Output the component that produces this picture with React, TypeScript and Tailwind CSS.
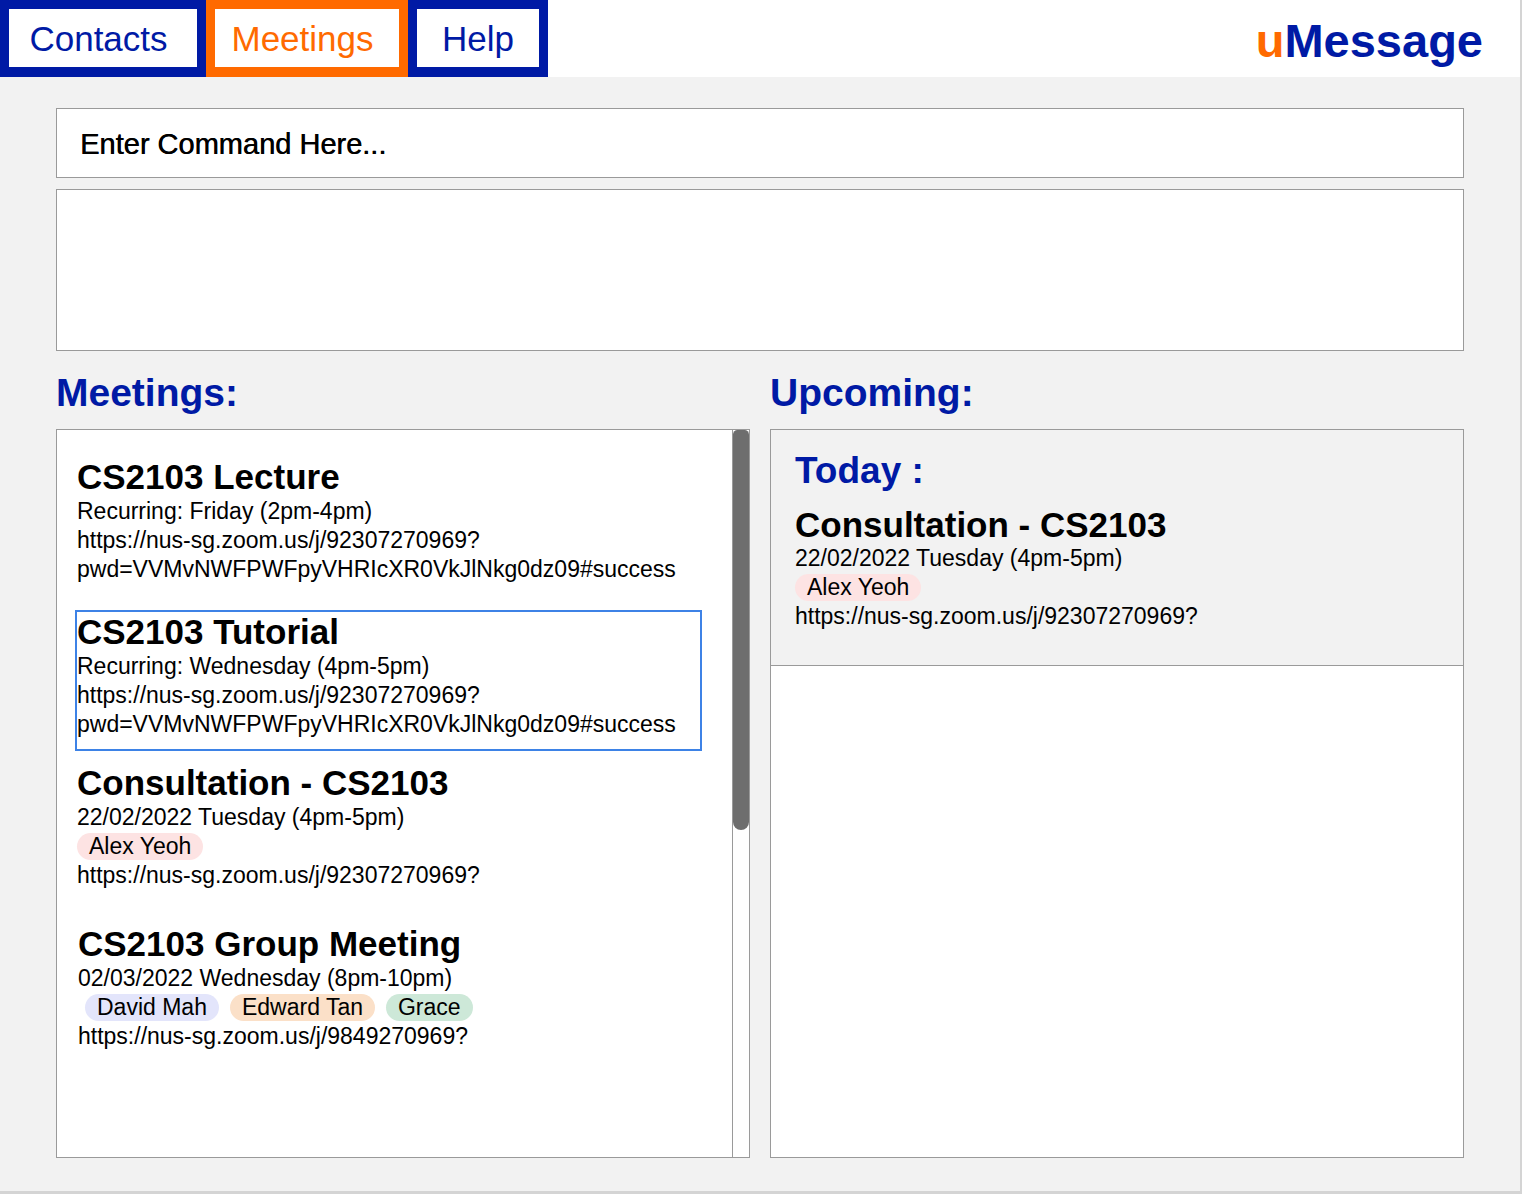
import React from 'react';

type Tag = { name: string; color: string };

type Meeting = {
  title: string;
  when: string;
  tags?: Tag[];
  links: string[];
  selected?: boolean;
  gap: string;
  tagRow?: string;
  shift?: string;
};

const PWD = 'pwd=VVMvNWFPWFpyVHRIcXR0VkJlNkg0dz09#success';

const meetings: Meeting[] = [
  {
    title: 'CS2103 Lecture',
    when: 'Recurring: Friday (2pm-4pm)',
    links: ['https://nus-sg.zoom.us/j/92307270969?', PWD],
    gap: 'mt-0',
  },
  {
    title: 'CS2103 Tutorial',
    when: 'Recurring: Wednesday (4pm-5pm)',
    links: ['https://nus-sg.zoom.us/j/92307270969?', PWD],
    selected: true,
    gap: 'mt-[14px]',
  },
  {
    title: 'Consultation - CS2103',
    when: '22/02/2022 Tuesday (4pm-5pm)',
    tags: [{ name: 'Alex Yeoh', color: 'bg-[#fde3e3]' }],
    links: ['https://nus-sg.zoom.us/j/92307270969?'],
    gap: 'mt-[10px]',
    tagRow: 'pl-0',
  },
  {
    title: 'CS2103 Group Meeting',
    when: '02/03/2022 Wednesday (8pm-10pm)',
    tags: [
      { name: 'David Mah', color: 'bg-[#e3e5fb]' },
      { name: 'Edward Tan', color: 'bg-[#fbe0c8]' },
      { name: 'Grace', color: 'bg-[#cde8d8]' },
    ],
    links: ['https://nus-sg.zoom.us/j/9849270969?'],
    gap: 'mt-[20px]',
    tagRow: 'pl-[7px]',
    shift: 'pl-[1px]',
  },
];

function TagPill({ tag }: { tag: Tag }) {
  return (
    <span className={`h-[27px] rounded-full px-[12px] leading-[27px] ${tag.color}`}>
      {tag.name}
    </span>
  );
}

function MeetingCard({ m }: { m: Meeting }) {
  return (
    <div
      className={`w-[627px] border-2 pb-[10px] ${m.gap} ${m.shift ?? ''} ${
        m.selected ? 'border-[#3d82e6]' : 'border-transparent'
      }`}
    >
      <div className="text-[35px] font-bold leading-[40px]">{m.title}</div>
      <div className="leading-[29px]">{m.when}</div>
      {m.tags && (
        <div className={`flex h-[29px] items-center gap-[11px] ${m.tagRow ?? ''}`}>
          {m.tags.map((t) => (
            <TagPill key={t.name} tag={t} />
          ))}
        </div>
      )}
      {m.links.map((l) => (
        <div key={l} className="leading-[29px]">
          {l}
        </div>
      ))}
    </div>
  );
}

function Tab({ label, active, nudge }: { label: string; active?: boolean; nudge?: boolean }) {
  return (
    <div
      className={`flex h-[77px] items-center justify-center border-[9px] border-b-[10px] bg-white pt-[3px] text-[35px] ${
        nudge ? 'pr-[9px]' : ''
      } ${active ? 'border-[#ff6a00] text-[#ff6a00]' : 'border-[#001aa5] text-[#001aa5]'}`}
    >
      {label}
    </div>
  );
}

export default function App() {
  return (
    <div className="flex h-[1194px] w-[1522px] flex-col border-r-2 border-b-[3px] border-[#d4d4d4] bg-[#f2f2f2] font-['Liberation_Sans',Arial,sans-serif] text-[23px] text-black">
      {/* top bar */}
      <div className="flex h-[77px] items-center justify-between bg-white pr-[37px]">
        <div className="grid grid-cols-[206px_202px_140px]">
          <Tab label="Contacts" nudge />
          <Tab label="Meetings" active nudge />
          <Tab label="Help" />
        </div>
        <div className="mt-[5px] text-[47px] font-bold leading-[46px]">
          <span className="text-[#ff6a00]">u</span>
          <span className="text-[#001aa5]">Message</span>
        </div>
      </div>

      <div className="flex flex-1 flex-col px-[56px] pt-[31px] pb-[33px]">
        {/* command box */}
        <div className="flex h-[70px] items-center border border-[#9a9a9a] bg-white pt-[3px] pl-[23px] text-[29px] [text-shadow:0.5px_0_0_currentColor]">
          Enter Command Here...
        </div>
        {/* result box */}
        <div className="mt-[11px] h-[162px] border border-[#9a9a9a] bg-white" />

        <div className="mt-[20px] grid flex-1 grid-cols-2 gap-x-[20px]">
          {/* meetings column */}
          <div className="flex flex-col">
            <h2 className="text-[39px] font-bold leading-[44px] text-[#001aa5]">Meetings:</h2>
            <div className="mt-[14px] flex flex-1 border border-[#9a9a9a] bg-white">
              <div className="flex-1 pt-[25px] pl-[18px]">
                {meetings.map((m) => (
                  <MeetingCard key={m.title} m={m} />
                ))}
              </div>
              <div className="w-[17px] border-l border-[#9a9a9a]">
                <div className="h-[400px] rounded-t-[5px] rounded-b-[9px] bg-[#6e6e6e]" />
              </div>
            </div>
          </div>

          {/* upcoming column */}
          <div className="flex flex-col">
            <h2 className="text-[39px] font-bold leading-[44px] text-[#001aa5]">Upcoming:</h2>
            <div className="mt-[14px] flex flex-1 flex-col border border-[#9a9a9a] bg-white">
              <div className="border-b border-[#9a9a9a] bg-[#f2f2f2] pt-[19px] pb-[34px] pl-[24px]">
                <div className="text-[37px] font-bold leading-[44px] text-[#001aa5]">Today :</div>
                <div className="mt-[13px] text-[35px] font-bold leading-[38px]">Consultation - CS2103</div>
                <div className="leading-[29px]">22/02/2022 Tuesday (4pm-5pm)</div>
                <div className="flex h-[29px] items-center">
                  <TagPill tag={{ name: 'Alex Yeoh', color: 'bg-[#fde3e3]' }} />
                </div>
                <div className="leading-[29px]">https://nus-sg.zoom.us/j/92307270969?</div>
              </div>
              <div className="flex-1" />
            </div>
          </div>
        </div>
      </div>
    </div>
  );
}
